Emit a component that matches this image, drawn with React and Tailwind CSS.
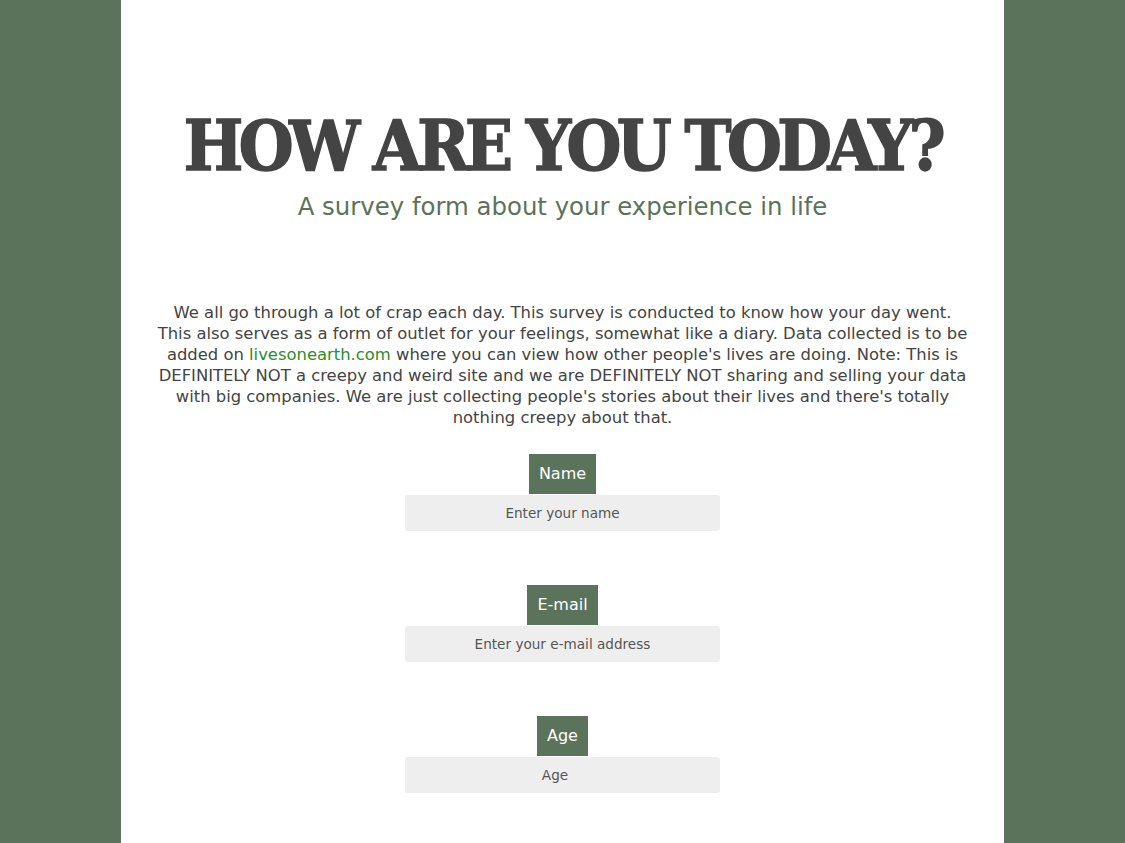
export default function App() {
    const fields = [
        { label: 'Name', placeholder: 'Enter your name', type: 'text' },
        { label: 'E-mail', placeholder: 'Enter your e-mail address', type: 'email' },
        { label: 'Age', placeholder: 'Age', type: 'number' },
    ];

    return (
        <div className="min-h-[843px] bg-[#5b735a] flex justify-center" style={{ fontFamily: '"DejaVu Sans", sans-serif' }}>
            <main className="w-[883px] bg-white min-h-[843px] flex flex-col items-center pt-[108px]">
                <h1
                    className="whitespace-nowrap text-[#444444] text-[70px] leading-[76px] font-bold tracking-[-4.5px] [font-stretch:condensed] [-webkit-text-stroke:1.5px_#444444]"
                    style={{ fontFamily: '"DejaVu Serif", serif' }}
                >
                    HOW ARE YOU TODAY?
                </h1>
                <p className="mt-[8px] text-[24.4px] leading-[30px] text-[#5b735a]">
                    A survey form about your experience in life
                </p>

                <p className="mt-[80px] w-[812px] text-center text-[16.4px] leading-[21px] text-[#444444]">
                    We all go through a lot of crap each day. This survey is conducted to know how your day went.
                    This also serves as a form of outlet for your feelings, somewhat like a diary. Data collected is to be
                    added on <a className="inline-block leading-[21px] text-[#2e8b2e]">livesonearth.com</a> where you can view how other people's lives are doing. Note: This is
                    DEFINITELY NOT a creepy and weird site and we are DEFINITELY NOT sharing and selling your data
                    with big companies. We are just collecting people's stories about their lives and there's totally
                    nothing creepy about that.
                </p>

                <form className="mt-[26px] flex flex-col items-center gap-[54px]">
                    {fields.map((f) => (
                        <div key={f.label} className="flex flex-col items-center">
                            <label className="bg-[#5b735a] text-white text-[16px] leading-[40px] h-[40px] px-[10px]">
                                {f.label}
                            </label>
                            <input
                                type={f.type}
                                placeholder={f.placeholder}
                                className="mt-px w-[315px] h-[36px] rounded-[3px] bg-[#eeeeee] text-center text-[13.6px] text-[#555] placeholder:text-[#555] outline-none"
                            />
                        </div>
                    ))}
                </form>
            </main>
        </div>
    );
}
